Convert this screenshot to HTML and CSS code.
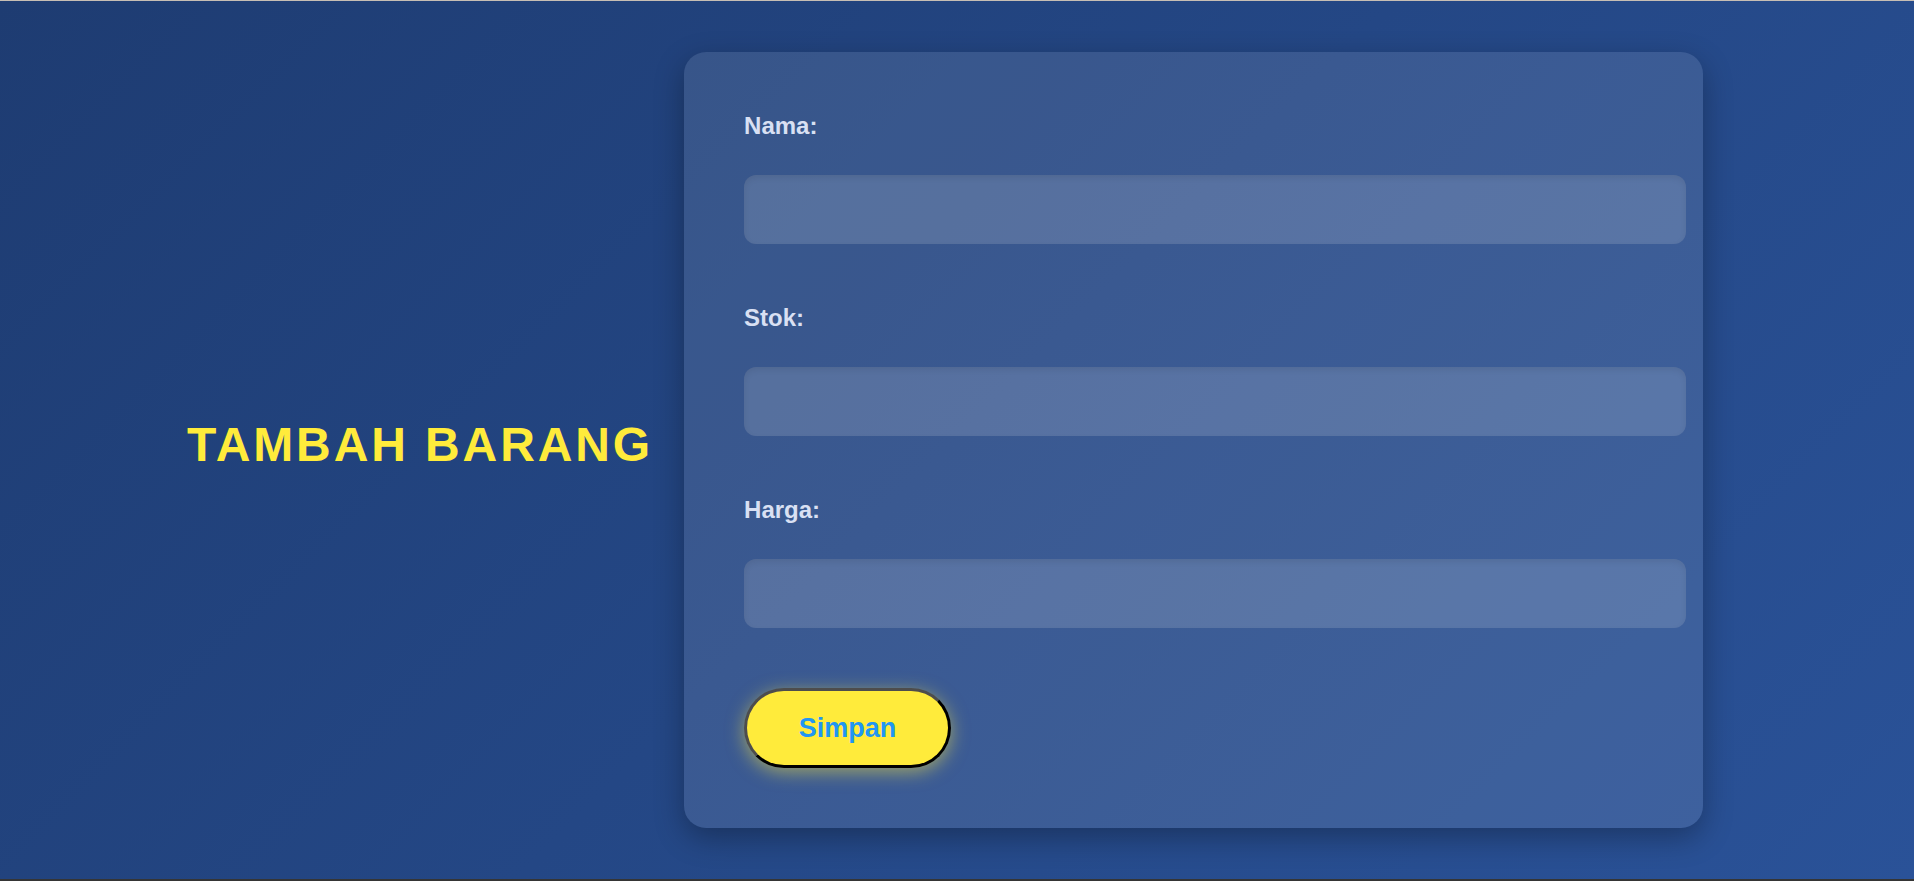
FILE: index.html
```html
<!DOCTYPE html>
<html lang="id">
<head>
<meta charset="utf-8">
<title>Tambah Barang</title>
<link rel="stylesheet" href="styles.css">
</head>
<body>
  <main class="page">
    <h1 class="title">TAMBAH BARANG</h1>
    <form class="card">
      <div class="field">
        <label class="label" for="nama">Nama:</label>
        <input class="input" id="nama" type="text">
      </div>
      <div class="field">
        <label class="label" for="stok">Stok:</label>
        <input class="input" id="stok" type="text">
      </div>
      <div class="field">
        <label class="label" for="harga">Harga:</label>
        <input class="input" id="harga" type="text">
      </div>
      <button class="btn" type="button">Simpan</button>
    </form>
  </main>
</body>
</html>
```
FILE: styles.css
```css
html, body {
  margin: 0;
  padding: 0;
}
body {
  height: 881px;
  box-sizing: border-box;
  border-top: 1px solid #c7beb4;
  border-bottom: 2px solid #353535;
  background: linear-gradient(135deg, #1e3c72 0%, #2a5298 100%);
  font-family: "Liberation Sans", Arial, sans-serif;
  overflow: hidden;
}
.page {
  height: 100%;
  display: flex;
  align-items: center;
  padding-left: 187px;
  gap: 31px;
}
.title {
  margin: 0;
  padding-top: 8px;
  font-size: 48px;
  font-weight: 700;
  letter-spacing: 2.9px;
  color: #ffeb3b;
  white-space: nowrap;
}
.card {
  width: 1019px;
  height: 776px;
  box-sizing: border-box;
  padding: 60px;
  background: rgba(255, 255, 255, 0.1);
  border-radius: 22px;
  box-shadow: 0 10px 30px rgba(0, 0, 0, 0.3);
  display: flex;
  flex-direction: column;
  align-items: flex-start;
}
.field {
  width: 100%;
  display: flex;
  flex-direction: column;
  margin-bottom: 60px;
}
.label {
  font-size: 24px;
  font-weight: 700;
  color: #d9e0f3;
  line-height: 26px;
  padding-top: 1px;
  margin-bottom: 36px;
}
.input {
  box-sizing: border-box;
  width: calc(100% + 43px);
  height: 69px;
  margin: 0;
  border: none;
  border-radius: 12px;
  background: rgba(255, 255, 255, 0.15);
  box-shadow: inset 0 3px 6px rgba(0, 0, 0, 0.08);
  outline: none;
}
.btn {
  width: 207px;
  height: 80px;
  margin: 0;
  padding: 0;
  box-sizing: border-box;
  border: 3px solid;
  border-color: #4d4d4d #000 #000 #4d4d4d;
  border-radius: 40px;
  background: #ffeb3b;
  color: #2196f3;
  font-family: "Liberation Sans", Arial, sans-serif;
  font-size: 27px;
  font-weight: 700;
  box-shadow: 0 4px 18px rgba(255, 235, 59, 0.5);
}
```
